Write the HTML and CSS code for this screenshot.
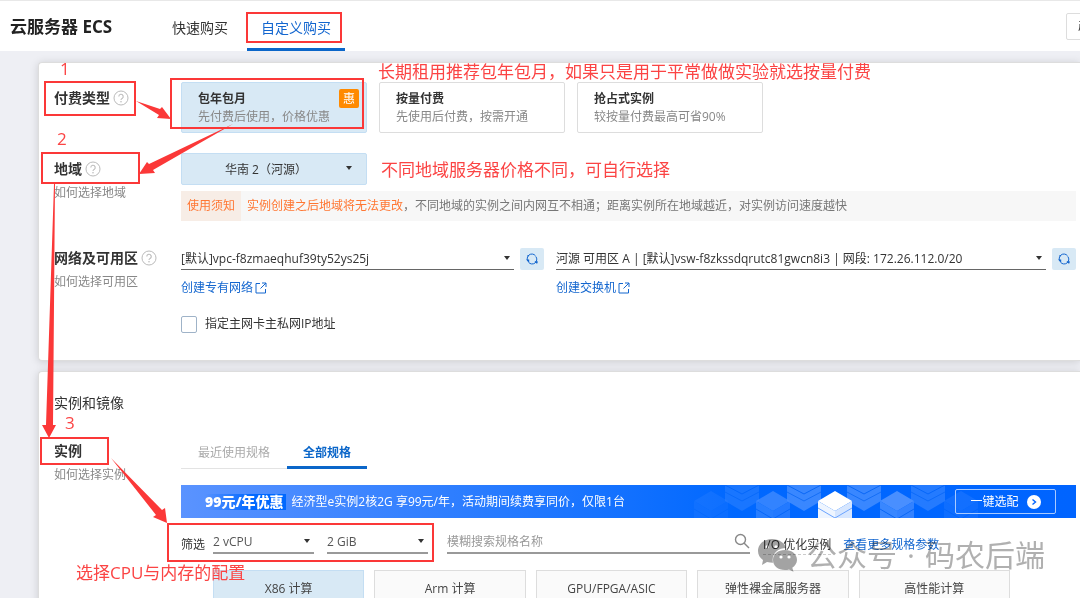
FILE: index.html
```html
<!DOCTYPE html>
<html lang="zh-CN">
<head>
<meta charset="utf-8">
<title>云服务器 ECS</title>
<link rel="stylesheet" href="styles.css">
</head>
<body>
<svg class="defs" width="0" height="0" aria-hidden="true">
  <symbol id="help" viewBox="0 0 16 16">
    <circle cx="8" cy="8" r="7" fill="none" stroke="currentColor"/>
    <path d="M5.8 6.5a2.2 2.2 0 1 1 3.3 1.9C8.300 8.900 8 9.200 8 10" fill="none" stroke="currentColor" stroke-width="1.100"/>
    <circle cx="8" cy="11.700" r=".8" fill="currentColor"/>
  </symbol>
  <symbol id="external" viewBox="0 0 12 12">
    <path d="M5 1.500H1V11h9.500V7M7 1h4v4M11 1 5.500 6.500" fill="none" stroke="currentColor"/>
  </symbol>
  <symbol id="refresh" viewBox="0 0 12 12">
    <path d="M2.200 8.500A4.600 4.600 0 0 1 9.500 2.800M9.800 3.500A4.600 4.600 0 0 1 2.500 9.200" fill="none" stroke="currentColor"/>
    <path d="M0 6.500h3.200v3.200zM12 8.500 8.500 8l2.500 3zM1 2.500l1.500-.5v2z" fill="currentColor"/>
  </symbol>
  <symbol id="cube" viewBox="0 0 34 44">
    <path d="M17 0 34 10 17 20 0 10z" fill="#5c9aff"/>
    <path d="M0 10 17 20V44L0 34z" fill="#4890ff"/>
    <path d="M34 10 17 20V44L34 34z" fill="#4089ff"/>
    <path d="M0 18l17 10 17-10" fill="none" stroke="#0d68f5"/>
  </symbol>
  <symbol id="cube-low" viewBox="0 0 34 26">
    <path d="M0 0H34V16L17 26 0 16z" fill="#4890ff"/>
    <path d="M0 0 17 9 34 0" fill="none" stroke="#0d68f5"/>
    <path d="M0 7l17 9 17-9" fill="none" stroke="#1a70f5"/>
  </symbol>
</svg>

<header class="header">
  <h1 class="brand">云服务器 ECS</h1>
  <nav class="nav">
    <a class="nav-link" href="#quick">快速购买</a>
    <a class="nav-link active" href="#custom">自定义购买</a>
  </nav>
  <button class="header-button" type="button">产品控制台</button>
</header>

<main class="main">
  <section class="card">
    <div class="row">
      <div class="label">
        <h2>付费类型 <svg class="help"><use href="#help"/></svg></h2>
      </div>
      <div class="options">
        <button class="option selected" type="button"><b>包年包月</b><span>先付费后使用，价格优惠</span><i class="badge">惠</i></button>
        <button class="option" type="button"><b>按量付费</b><span>先使用后付费，按需开通</span></button>
        <button class="option" type="button"><b>抢占式实例</b><span>较按量付费最高可省90%</span></button>
      </div>
    </div>

    <div class="row region-row">
      <div class="label">
        <h2>地域 <svg class="help"><use href="#help"/></svg></h2>
        <a href="#region-help">如何选择地域</a>
      </div>
      <div>
        <div class="select region">
          <select aria-label="地域"><option>华南 2（河源）</option></select>
        </div>
        <div class="notice">
          <span class="notice-tag">使用须知</span>
          <p><em>实例创建之后地域将无法更改</em>，不同地域的实例之间内网互不相通；距离实例所在地域越近，对实例访问速度越快</p>
        </div>
      </div>
    </div>

    <div class="row network-row">
      <div class="label">
        <h2>网络及可用区 <svg class="help"><use href="#help"/></svg></h2>
        <a href="#zone-help">如何选择可用区</a>
      </div>
      <div>
        <div class="networks">
          <div>
            <div class="field">
              <div class="select line"><select aria-label="专有网络"><option>[默认]vpc-f8zmaeqhuf39ty52ys25j</option></select></div>
              <button class="refresh" type="button" aria-label="刷新专有网络"><svg><use href="#refresh"/></svg></button>
            </div>
            <a class="create" href="#vpc">创建专有网络<svg><use href="#external"/></svg></a>
          </div>
          <div>
            <div class="field">
              <div class="select line"><select aria-label="交换机"><option>河源 可用区 A | [默认]vsw-f8zkssdqrutc81gwcn8i3 | 网段: 172.26.112.0/20</option></select></div>
              <button class="refresh" type="button" aria-label="刷新交换机"><svg><use href="#refresh"/></svg></button>
            </div>
            <a class="create" href="#vswitch">创建交换机<svg><use href="#external"/></svg></a>
          </div>
        </div>
        <label class="check"><input type="checkbox">指定主网卡主私网IP地址</label>
      </div>
    </div>
  </section>

  <section class="card instance-card">
    <h2 class="card-title">实例和镜像</h2>
    <div class="row">
      <div class="label">
        <h2>实例</h2>
        <a href="#instance-help">如何选择实例</a>
      </div>
      <div>
        <div class="tabs">
          <button class="tab" type="button">最近使用规格</button>
          <button class="tab active" type="button">全部规格</button>
        </div>

        <div class="banner">
          <svg class="cubes" viewBox="0 0 310 33" aria-hidden="true">
            <use href="#cube" x="3" y="6" width="34" height="44" opacity=".15"/>
            <use href="#cube-low" x="34" y="0" width="34" height="26" opacity=".35"/>
            <use href="#cube" x="65" y="6" width="34" height="44" opacity=".55"/>
            <use href="#cube-low" x="96" y="0" width="34" height="26" opacity=".8"/>
            <use href="#cube-low" x="156" y="0" width="34" height="26" opacity=".8"/>
            <use href="#cube" x="189" y="6" width="34" height="44" opacity=".8"/>
            <use href="#cube-low" x="220" y="0" width="34" height="26" opacity=".5"/>
            <use href="#cube" x="253" y="6" width="34" height="44" opacity=".2"/>
            <path d="M144 6l17 10-17 10-17-10z" fill="#fff"/>
            <path d="M127 16l17 10v18l-17-10z" fill="#eef5ff"/>
            <path d="M161 16l-17 10v18l17-10z" fill="#d6e6ff"/>
            <path d="M127 23l17 10 17-10" fill="none" stroke="#6aa3ff"/>
          </svg>
          <strong>99元/年优惠</strong>
          <span>经济型e实例2核2G 享99元/年，活动期间续费享同价，仅限1台</span>
          <button class="pick" type="button">一键选配
            <svg viewBox="0 0 14 14"><circle cx="7" cy="7" r="7" fill="#fff"/><path d="M5.500 4.500 8.500 7l-3 2.500" fill="none" stroke="#0064ff" stroke-width="1.400"/></svg>
          </button>
        </div>

        <div class="filters">
          <span class="filter-name">筛选</span>
          <div class="select line cpu"><select aria-label="vCPU"><option>2 vCPU</option></select></div>
          <div class="select line memory"><select aria-label="内存"><option>2 GiB</option></select></div>
          <div class="search">
            <input type="text" placeholder="模糊搜索规格名称" aria-label="模糊搜索规格名称">
            <svg viewBox="0 0 16 16"><circle cx="6.500" cy="6.500" r="5" fill="none" stroke="#888" stroke-width="1.400"/><path d="M10 10l5 5" stroke="#888" stroke-width="1.400"/></svg>
          </div>
          <span class="io">I/O 优化实例</span>
          <a class="more" href="#specs">查看更多规格参数</a>
        </div>

        <div class="types">
          <button class="type selected" type="button">X86 计算</button>
          <button class="type" type="button">Arm 计算</button>
          <button class="type" type="button">GPU/FPGA/ASIC</button>
          <button class="type" type="button">弹性裸金属服务器</button>
          <button class="type" type="button">高性能计算</button>
        </div>
      </div>
    </div>
  </section>
</main>

<div class="watermark">
  <svg viewBox="0 0 40 34" aria-hidden="true">
    <path d="M15 1C7 1 1 6 1 13c0 4 2 7 5 9l-1 5 5-3c2 .6 4 .8 6 .8C14 16 21 10 29 10 28 5 22 1 15 1z" fill="#a3a3a3"/>
    <path d="M28 12c-7 0-12 4-12 10s5 10 12 10c1.500 0 3-.2 4-.6l4.500 2.300-1.200-4C38 28 40 25 40 22c0-6-5-10-12-10z" fill="#a3a3a3"/>
    <g fill="#fff"><circle cx="10" cy="9" r="1.700"/><circle cx="19" cy="9" r="1.700"/><circle cx="24" cy="19" r="1.600"/><circle cx="32" cy="19" r="1.600"/></g>
  </svg>
  <span>公众号</span><span>·</span><span>码农后端</span>
</div>

<div class="notes">
  <svg class="marks" viewBox="0 0 1080 598" aria-hidden="true">
    <g fill="none" stroke="#fb3838" stroke-width="2">
      <rect x="247" y="13" width="94" height="29"/>
      <rect x="45" y="82" width="90" height="33"/>
      <rect x="171" y="79" width="192" height="49"/>
      <rect x="42" y="153" width="97" height="30"/>
      <rect x="41" y="438" width="67" height="26"/>
      <rect x="168" y="524" width="265" height="37"/>
    </g>
    <g fill="#fb3838">
      <path d="M136 101l24 8 2-2 9 12-14-1 2-3z"/>
      <path d="M233 124l-84 40-2-2-8 12 16-1-2-3z"/>
      <path d="M54 184h1l-2 241h3l-7 13-7-13h4z"/>
      <path d="M111 458l51 52 3-2 2 15-14-6 3-2z"/>
    </g>
  </svg>
  <span class="note n1">1</span>
  <span class="note n2">2</span>
  <span class="note n3">3</span>
  <span class="note pay">长期租用推荐包年包月，如果只是用于平常做做实验就选按量付费</span>
  <span class="note area">不同地域服务器价格不同，可自行选择</span>
  <span class="note spec">选择CPU与内存的配置</span>
</div>
</body>
</html>
```
FILE: styles.css
```css
* { box-sizing: border-box; }

html { height: 100%; }

body {
  position: relative;
  height: 100%;
  margin: 0;
  overflow: hidden;
  background: #eeeff4;
  color: #333;
  font: 12px/20px "Open Sans", "Noto Sans CJK SC", sans-serif;
}

h1, h2, p { margin: 0; }
button, input, select { margin: 0; font: inherit; color: inherit; }
button { padding: 0; border: 0; background: none; }
a { color: #1366cf; text-decoration: none; }
svg { display: block; }
.defs { position: absolute; }

/* Header */
.header {
  display: flex;
  align-items: stretch;
  height: 51px;
  padding-left: 10px;
  overflow: hidden;
  border-top: 1px solid #e8e8e8;
  background: #fff;
}
.brand { flex: none; width: 146px; font-size: 17px; line-height: 52px; color: #222; white-space: nowrap; }
.nav { display: flex; flex: 1; gap: 3px; }
.nav-link { padding: 0 16px; font-size: 14px; line-height: 54px; color: #333; }
.nav-link.active { padding: 0 14px; border-bottom: 3px solid #0b66c9; color: #1366cf; }
.header-button {
  flex: none;
  align-self: center;
  width: 84px;
  height: 27px;
  margin-right: -70px;
  border: 1px solid #ddd;
  border-radius: 2px;
}

/* Cards */
.main { padding: 11px 0 0 38px; }
.card {
  padding: 19px 4px 27px 15px;
  border: 1px solid #ddd;
  border-right: 0;
  border-radius: 4px 0 0 4px;
  background: #fff;
  box-shadow: 0 1px 8px rgba(0, 0, 0, .15);
}
.instance-card { margin-top: 10px; padding-top: 21px; }
.card-title { margin-bottom: 24px; font-size: 14px; font-weight: 400; }
.row { display: grid; grid-template-columns: 127px minmax(0, 1fr); }
.region-row { margin-top: 20px; }
.network-row { margin-top: 27px; }

.label { display: flex; flex-direction: column; gap: 4px; padding-top: 6px; }
.label h2 { display: flex; align-items: center; gap: 3px; font-size: 14px; line-height: 20px; white-space: nowrap; }
.label a { color: #888; }
.network-row .label { padding-top: 0; }
.instance-card .label { padding-top: 4px; }
.help { width: 16px; height: 16px; color: #bbb; }

/* Payment options */
.options { display: flex; gap: 12px; }
.option {
  position: relative;
  display: flex;
  flex: 0 1 186px;
  flex-direction: column;
  height: 51px;
  padding: 7px 16px 5px;
  border: 1px solid #ddd;
  border-radius: 2px;
  background: #fff;
  line-height: 18px;
  text-align: left;
  white-space: nowrap;
}
.option span { color: #888; }
.option.selected { border-color: #c4def3; background: #d8e9f5; }
.badge {
  position: absolute;
  top: 6px;
  right: 7px;
  width: 20px;
  border-radius: 2px;
  background: #ff8a00;
  color: #fff;
  font-style: normal;
  line-height: 19px;
  text-align: center;
}

/* Selects */
.select { position: relative; }
.select select {
  display: block;
  width: 100%;
  border: 0;
  border-radius: 0;
  background: transparent;
  appearance: none;
}
.select::after {
  content: "";
  position: absolute;
  top: 50%;
  right: 4px;
  margin-top: -3px;
  border: 3px solid transparent;
  border-top: 4px solid #333;
  border-bottom: 0;
  pointer-events: none;
}
.region { width: 186px; }
.region select {
  height: 32px;
  padding: 2px 34px 0 18px;
  border: 1px solid #c4def3;
  border-radius: 2px;
  background: #d8e9f5;
  text-align-last: center;
}
.region::after { right: 15px; }
.line select { height: 22px; padding: 0 14px 0 0; border-bottom: 1px solid #666; }

.notice { display: flex; margin-top: 6px; background: #f7f7f7; color: #777; line-height: 30px; white-space: nowrap; }
.notice-tag { flex: none; padding: 0 6px; background: #f7ede6; color: #ff7733; }
.notice p { padding-left: 6px; }
.notice em { color: #ff7733; font-style: normal; }

/* Network */
.networks { display: grid; grid-template-columns: 363px minmax(0, 1fr); gap: 12px; }
.field { display: flex; gap: 6px; }
.field .select { flex: 1; min-width: 0; }
.refresh {
  display: grid;
  flex: none;
  place-items: center;
  width: 24px;
  height: 22px;
  border-radius: 2px;
  background: #d8e9f5;
  color: #1366cf;
}
.refresh svg { width: 12px; height: 12px; }
.create { display: inline-flex; align-items: center; gap: 2px; margin-top: 8px; }
.create svg { width: 12px; height: 12px; }
.check { display: flex; align-items: center; gap: 8px; margin-top: 16px; line-height: 20px; }
.check input {
  width: 16px;
  height: 17px;
  margin: 0;
  border: 1px solid #9fb3c8;
  border-radius: 2px;
  background: #fff;
  appearance: none;
}
.network-row { margin-bottom: -1px; }

/* Instance specification */
.tabs { display: flex; }
.tab { height: 32px; padding: 0 17px; border-bottom: 1px solid #e3e3e3; color: #aaa; }
.tab.active { padding: 2px 16px 0; border-bottom: 3px solid #0b66c9; color: #0b66c9; font-weight: 700; }

.banner {
  position: relative;
  display: flex;
  align-items: center;
  height: 33px;
  margin-top: 16px;
  padding: 0 20px 0 24px;
  overflow: hidden;
  background: linear-gradient(90deg, #5a93ff, #0068ff 62%, #0064ff);
  color: #fff;
  white-space: nowrap;
}
.banner strong {
  position: relative;
  margin-right: 6px;
  padding-right: 2px;
  background: linear-gradient(90deg, transparent, #0068ff 60%);
  font-size: 14px;
  font-weight: 900;
  line-height: 16px;
}
.banner span { position: relative; flex: 1; }
.cubes { position: absolute; top: 0; right: 75px; width: 310px; height: 33px; }
.pick {
  position: relative;
  display: flex;
  flex: none;
  align-items: center;
  justify-content: center;
  gap: 8px;
  width: 101px;
  height: 25px;
  border: 1px solid #a9caff;
  border-radius: 2px;
  color: #fff;
}
.pick svg { width: 14px; height: 14px; }

.filters { display: flex; align-items: flex-start; margin-top: 12px; white-space: nowrap; }
.filters .select select, .search input { height: 24px; padding-top: 2px; border-bottom: 2px solid #999; color: #555; }
.filter-name, .io, .more { padding-top: 6px; line-height: 18px; }
.filter-name { width: 32px; }
.cpu { width: 101px; margin-right: 13px; }
.memory { width: 101px; margin-right: 19px; }
.search { position: relative; flex: 0 1 303px; margin-right: 13px; }
.search input { display: block; width: 100%; padding: 0 20px 0 0; border-width: 0 0 2px; border-radius: 0; background: none; }
.search input::placeholder { color: #999; opacity: 1; }
.search svg { position: absolute; top: 3px; right: 0; width: 16px; height: 16px; }
.io { margin-right: 12px; border-bottom: 1px dashed #ccc; }

.types { display: grid; grid-template-columns: repeat(5, minmax(0, 1fr)); gap: 10px; margin: 15px 66px 0 32px; }
.type { height: 38px; border: 1px solid #ddd; background: #fafafa; color: #444; white-space: nowrap; }
.type.selected { border-color: #c4def3; background: #d8e9f5; }

/* Overlays */
.watermark {
  position: absolute;
  top: 535px;
  left: 757px;
  display: flex;
  align-items: center;
  gap: 10px;
  color: #b0b0b0;
  font-size: 30px;
  line-height: 40px;
  white-space: nowrap;
  mix-blend-mode: multiply;
  pointer-events: none;
}
.watermark svg { width: 40px; height: 34px; }

.notes { position: absolute; top: 0; left: 0; width: 100%; pointer-events: none; }
.marks { width: 1080px; height: 598px; }
.note { position: absolute; color: #fb4444; font-size: 17px; line-height: 20px; white-space: nowrap; }
.n1 { top: 59px; left: 60px; }
.n2 { top: 129px; left: 57px; }
.n3 { top: 413px; left: 65px; }
.pay { top: 62px; left: 378px; }
.area { top: 160px; left: 381px; }
.spec { top: 563px; left: 76px; }
```
